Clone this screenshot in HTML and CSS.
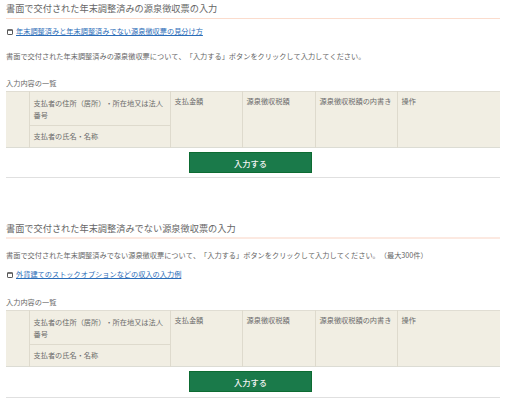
FILE: index.html
```html
<!DOCTYPE html>
<html>
<head>
  <meta charset="UTF-8">
  <link rel="stylesheet" href="styles.css">
</head>
<body>
  <section class="block first">
    <h2 class="block-title">書面で交付された年末調整済みの源泉徴収票の入力</h2>
    <p class="ref-link link-top">
      <svg class="win-icon" viewBox="0 0 6 6"><rect x="0.5" y="0.9" width="5" height="4.6" rx="0.6" fill="#fff" stroke="#444" stroke-width="0.9"/><rect x="0.2" y="0.5" width="5.6" height="1.1" fill="#444"/></svg>
      <a href="#">年末調整済みと年末調整済みでない源泉徴収票の見分け方</a>
    </p>
    <p class="lead lead-after-link">書面で交付された年末調整済みの源泉徴収票について、「入力する」ボタンをクリックして入力してください。</p>
    <p class="list-label label-a">入力内容の一覧</p>
    <table class="entry-table">
      <tr>
        <th class="col-no" rowspan="2"></th>
        <th class="col-payer">支払者の住所（居所）・所在地又は法人番号</th>
        <th class="col-pay" rowspan="2">支払金額</th>
        <th class="col-tax" rowspan="2">源泉徴収税額</th>
        <th class="col-note" rowspan="2">源泉徴収税額の内書き</th>
        <th rowspan="2">操作</th>
      </tr>
      <tr>
        <th class="col-payer">支払者の氏名・名称</th>
      </tr>
    </table>
    <div class="btn-row"><button class="add-btn">入力する</button></div>
  </section>

  <section class="block second">
    <h2 class="block-title">書面で交付された年末調整済みでない源泉徴収票の入力</h2>
    <p class="lead lead-top">書面で交付された年末調整済みでない源泉徴収票について、「入力する」ボタンをクリックして入力してください。（最大300件）</p>
    <p class="ref-link link-bottom">
      <svg class="win-icon" viewBox="0 0 6 6"><rect x="0.5" y="0.9" width="5" height="4.6" rx="0.6" fill="#fff" stroke="#444" stroke-width="0.9"/><rect x="0.2" y="0.5" width="5.6" height="1.1" fill="#444"/></svg>
      <a href="#">外貨建てのストックオプションなどの収入の入力例</a>
    </p>
    <p class="list-label label-b">入力内容の一覧</p>
    <table class="entry-table">
      <tr>
        <th class="col-no" rowspan="2"></th>
        <th class="col-payer">支払者の住所（居所）・所在地又は法人番号</th>
        <th class="col-pay" rowspan="2">支払金額</th>
        <th class="col-tax" rowspan="2">源泉徴収税額</th>
        <th class="col-note" rowspan="2">源泉徴収税額の内書き</th>
        <th rowspan="2">操作</th>
      </tr>
      <tr>
        <th class="col-payer">支払者の氏名・名称</th>
      </tr>
    </table>
    <div class="btn-row"><button class="add-btn">入力する</button></div>
  </section>
</body>
</html>
```

FILE: styles.css
```css
html, body { margin: 0; padding: 0; background: #fff; }
body { width: 494px; padding: 0 12px 0 6px; font-family: "Noto Sans CJK JP", "Liberation Sans", sans-serif; color: #666; font-size: 7.2px; line-height: 12px; text-spacing-trim: space-all; font-kerning: none; }
p { margin: 0; }
.block { border-bottom: 1px solid #e0e0e0; }
.first { padding-top: 2px; height: 175px; }
.second { margin-top: 44px; height: 175px; }
.block-title { margin: 0; height: 16px; border-bottom: 1px solid #fbdccd; font-size: 9.2px; font-weight: normal; line-height: 13px; color: #666; }
.second .block-title { height: 15px; border-bottom: 2px solid #fce9e1; }
.ref-link { display: flex; align-items: center; gap: 3px; height: 12px; }
.ref-link a { color: #2a6cb8; text-decoration: underline; }
.win-icon { width: 6px; height: 6px; margin-left: 1px; margin-top: 1px; flex: none; }
.link-top { margin-top: 6px; }
.lead-after-link { margin-top: 13px; }
.label-a { margin-top: 15px; margin-bottom: 2px; }
.lead-top { margin-top: 10px; }
.link-bottom { margin-top: 7px; }
.label-b { margin-top: 16px; margin-bottom: 2px; }
.entry-table { width: 494px; table-layout: fixed; border-collapse: collapse; background: #f1eee3; border-top: 1px solid #e0ddd3; border-bottom: 1px solid #dcdcd4; }
.entry-table th { padding: 3px 3px 0 4px; border-left: 1px solid #dedacd; font-weight: normal; text-align: left; vertical-align: top; line-height: 12px; color: #6a6a6a; box-sizing: border-box; }
.entry-table th:first-child { border-left: none; }
.entry-table tr:first-child .col-payer { height: 34px; padding-top: 5px; }
.entry-table tr + tr .col-payer { height: 22px; padding-top: 4px; border-top: 1px solid #dedacd; border-left: 1px solid #dedacd; }
.col-no { width: 23px; }
.col-payer { width: 141px; }
.col-pay { width: 72px; }
.col-tax { width: 73px; }
.col-note { width: 82px; }
.btn-row { display: flex; justify-content: center; margin-top: 4px; padding-right: 5px; }
.add-btn { width: 123px; height: 21px; padding: 0; background: #1a7a4a; border: 1px solid #0d6b32; color: #f4f4f4; font-family: inherit; font-size: 8.2px; font-weight: 500; }
```
